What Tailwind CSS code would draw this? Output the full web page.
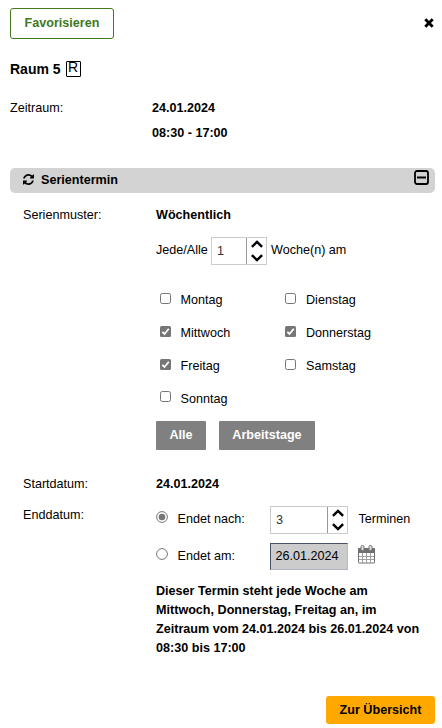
<!DOCTYPE html>
<html lang="de">
<head>
<meta charset="utf-8">
<title>Raum 5</title>
<script src="https://cdn.jsdelivr.net/npm/@tailwindcss/browser@4"></script>
</head>
<body class="bg-white">
<svg class="hidden">
  <symbol id="check" viewBox="0 0 11 11"><rect width="11" height="11" rx="1.500" fill="#767676"/><path d="M2.300 5.800 4.500 8 8.800 2.800" fill="none" stroke="#fff" stroke-width="1.800"/></symbol>
  <symbol id="box" viewBox="0 0 11 11"><rect x=".5" y=".5" width="10" height="10" rx="1.800" fill="#fff" stroke="#767676"/></symbol>
  <symbol id="up" viewBox="0 0 12 8"><path d="M.9 6.800 6 1.900l5.100 4.900" fill="none" stroke="#000" stroke-width="2.500"/></symbol>
  <symbol id="down" viewBox="0 0 12 8"><path d="M.9 1.200 6 6.100l5.100-4.900" fill="none" stroke="#000" stroke-width="2.500"/></symbol>
</svg>
<main class="w-[442px] h-[728px] overflow-hidden pl-[10px] pr-[7px] pt-2 flex flex-col font-['Liberation_Sans',Arial,sans-serif] text-[12.6px] leading-[20px] text-black">
  <header class="flex justify-between items-start h-[31px] shrink-0">
    <button class="w-[104px] h-[31px] pb-px border border-[#417a1e] rounded-[3px] font-bold text-[#417a1e]">Favorisieren</button>
    <svg class="w-[10px] h-[10px] mt-[10px] mr-px" viewBox="0 0 10 10"><path d="M1.300 1.300 8.700 8.700M8.700 1.300 1.300 8.700" stroke="#000" stroke-width="2.900"/></svg>
  </header>
  <h1 class="mt-[20px] h-[20px] shrink-0 flex items-center text-[14px] font-bold">Raum 5<span class="ml-[5px] w-[15px] h-4 border border-black rounded-[1px] font-normal leading-[10px] text-center text-[14px]">R</span></h1>
  <section class="mt-[19px] flex shrink-0 h-[44px]">
    <div class="w-[142px]">Zeitraum:</div>
    <div class="font-bold flex flex-col gap-[5px]"><span>24.01.2024</span><span>08:30 - 17:00</span></div>
  </section>
  <div class="mt-[26px] h-[25px] shrink-0 bg-[#d3d3d3] rounded-[5px] flex items-start pl-[13px] pr-[6px] pt-[2px] font-bold">
    <svg class="w-[11px] h-[11px] mt-[4px] mr-[7px]" viewBox="0 0 1536 1536"><path d="M1511 928q0 5-1 7-64 268-268 434.500T764 1536q-146 0-282.500-55T238 1324l-129 129q-19 19-45 19t-45-19-19-45V960q0-26 19-45t45-19h448q26 0 45 19t19 45-19 45l-137 137q71 66 161 102t187 36q134 0 250-65t186-179q11-17 53-117 8-23 30-23h192q13 0 22.500 9.500t9.500 22.500zm25-800v448q0 26-19 45t-45 19h-448q-26 0-45-19t-19-45 19-45l138-138Q969 256 768 256q-134 0-250 65T332 500q-11 17-53 117-8 23-30 23H50q-13 0-22.500-9.500T18 608v-7q65-268 270-434.500T768 0q146 0 284 55.500T1297 212l130-129q19-19 45-19t45 19 19 45z"/></svg>
    <span>Serientermin</span>
    <svg class="ml-auto w-[15px] h-[15px]" viewBox="0 0 15 15"><rect x="1" y="1" width="13" height="13" rx="2" fill="none" stroke="#000" stroke-width="1.800"/><path d="M3 7.500h9" stroke="#000" stroke-width="2"/></svg>
  </div>
  <section class="mt-[12px] pl-[13px] flex shrink-0 h-[245px]">
    <div class="w-[133px]">Serienmuster:</div>
    <div>
      <div class="font-bold">Wöchentlich</div>
      <div class="mt-[12px] h-[28px] flex items-start">
        <span class="w-[55px] mt-[3px]">Jede/Alle</span>
        <div class="w-[56px] h-[28px] border border-[#ccc] flex">
          <span class="w-[35px] border-r border-[#999] pl-[5px] pt-[3px] text-[#333]">1</span>
          <span class="flex flex-col pl-[4px] pt-[2px] gap-[6px]"><svg class="w-[12px] h-[8px]"><use href="#up"/></svg><svg class="w-[12px] h-[8px]"><use href="#down"/></svg></span>
        </div>
        <span class="ml-[4px] mt-[3px]">Woche(n) am</span>
      </div>
      <div class="mt-[25px] pl-[4px] grid grid-cols-[125px_125px] auto-rows-[33px]">
        <label class="flex gap-[9.5px]"><svg class="w-[11px] h-[11px] mt-[3px]"><use href="#box"/></svg>Montag</label>
        <label class="flex gap-[10px]"><svg class="w-[11px] h-[11px] mt-[3px]"><use href="#box"/></svg>Dienstag</label>
        <label class="flex gap-[9.5px]"><svg class="w-[11px] h-[11px] mt-[3px]"><use href="#check"/></svg>Mittwoch</label>
        <label class="flex gap-[10px]"><svg class="w-[11px] h-[11px] mt-[3px]"><use href="#check"/></svg>Donnerstag</label>
        <label class="flex gap-[9.5px]"><svg class="w-[11px] h-[11px] mt-[3px]"><use href="#check"/></svg>Freitag</label>
        <label class="flex gap-[10px]"><svg class="w-[11px] h-[11px] mt-[3px]"><use href="#box"/></svg>Samstag</label>
        <label class="flex gap-[9.5px]"><svg class="w-[11px] h-[11px] mt-[2px]"><use href="#box"/></svg>Sonntag</label>
      </div>
      <div class="-mt-px flex gap-[13px] font-bold text-white">
        <button class="w-[50px] h-[29px] pb-px bg-[#808080] rounded-[1px]">Alle</button>
        <button class="w-[96px] h-[29px] pb-px bg-[#808080] rounded-[1px]">Arbeitstage</button>
      </div>
    </div>
  </section>
  <section class="mt-[24px] pl-[13px] flex shrink-0">
    <div class="w-[133px]">Startdatum:</div>
    <div class="font-bold">24.01.2024</div>
  </section>
  <section class="mt-[11px] pl-[13px] flex shrink-0">
    <div class="w-[133px]">Enddatum:</div>
    <div class="pt-px">
      <div class="h-[28px] flex items-start">
        <svg class="w-[12px] h-[12px] mt-[5px] mr-[9.5px]" viewBox="0 0 12 12"><circle cx="6" cy="6" r="5.400" fill="#fff" stroke="#767676"/><circle cx="6" cy="6" r="3.300" fill="#767676"/></svg>
        <span class="w-[92.5px] mt-[3px]">Endet nach:</span>
        <div class="w-[78px] h-[28px] border border-[#ccc] flex">
          <span class="w-[57px] border-r border-[#999] pl-[5px] pt-[3px] text-[#333]">3</span>
          <span class="flex flex-col pl-[4px] pt-[2px] gap-[6px]"><svg class="w-[12px] h-[8px]"><use href="#up"/></svg><svg class="w-[12px] h-[8px]"><use href="#down"/></svg></span>
        </div>
        <span class="ml-[10.5px] mt-[3px]">Terminen</span>
      </div>
      <div class="mt-[9px] h-[27px] flex items-start">
        <svg class="w-[12px] h-[12px] mt-[5px] mr-[9.5px]" viewBox="0 0 12 12"><circle cx="6" cy="6" r="5.400" fill="#fff" stroke="#767676"/></svg>
        <span class="w-[92.5px] mt-[3px]">Endet am:</span>
        <div class="w-[78px] h-[27px] border border-t-[#4a4f68] border-l-[#4a4f68] border-r-[#b8bcc8] border-b-[#b0b4c8] bg-[#ccc] pl-[4.500px] pt-[2px]">26.01.2024</div>
        <svg class="ml-[10px] mt-[2px] w-[17px] h-[19px]" viewBox="0 0 17 19"><rect x=".5" y="3.500" width="16" height="14.500" rx=".5" fill="#fff" stroke="#707070"/><path d="M0 3.500Q0 3 .5 3h16q.5 0 .5.500V8H0z" fill="#707070"/><path d="M4.500 8v10M8.500 8v10M12.500 8v10M1 11.500h15M1 14.500h15" stroke="#a0a0a0"/><rect x="3" y=".5" width="3" height="5" rx="1.200" fill="#ddd" stroke="#777"/><rect x="11" y=".5" width="3" height="5" rx="1.200" fill="#ddd" stroke="#777"/></svg>
      </div>
      <p class="mt-[12px] w-[270px] leading-[19px] font-bold">Dieser Termin steht jede Woche am<br>Mittwoch, Donnerstag, Freitag an, im<br>Zeitraum vom 24.01.2024 bis 26.01.2024 von<br>08:30 bis 17:00</p>
    </div>
  </section>
  <button class="mt-[38px] self-end shrink-0 w-[109px] h-[28px] rounded-[3px] bg-[#ffa900] font-bold">Zur Übersicht</button>
</main>
</body>
</html>
